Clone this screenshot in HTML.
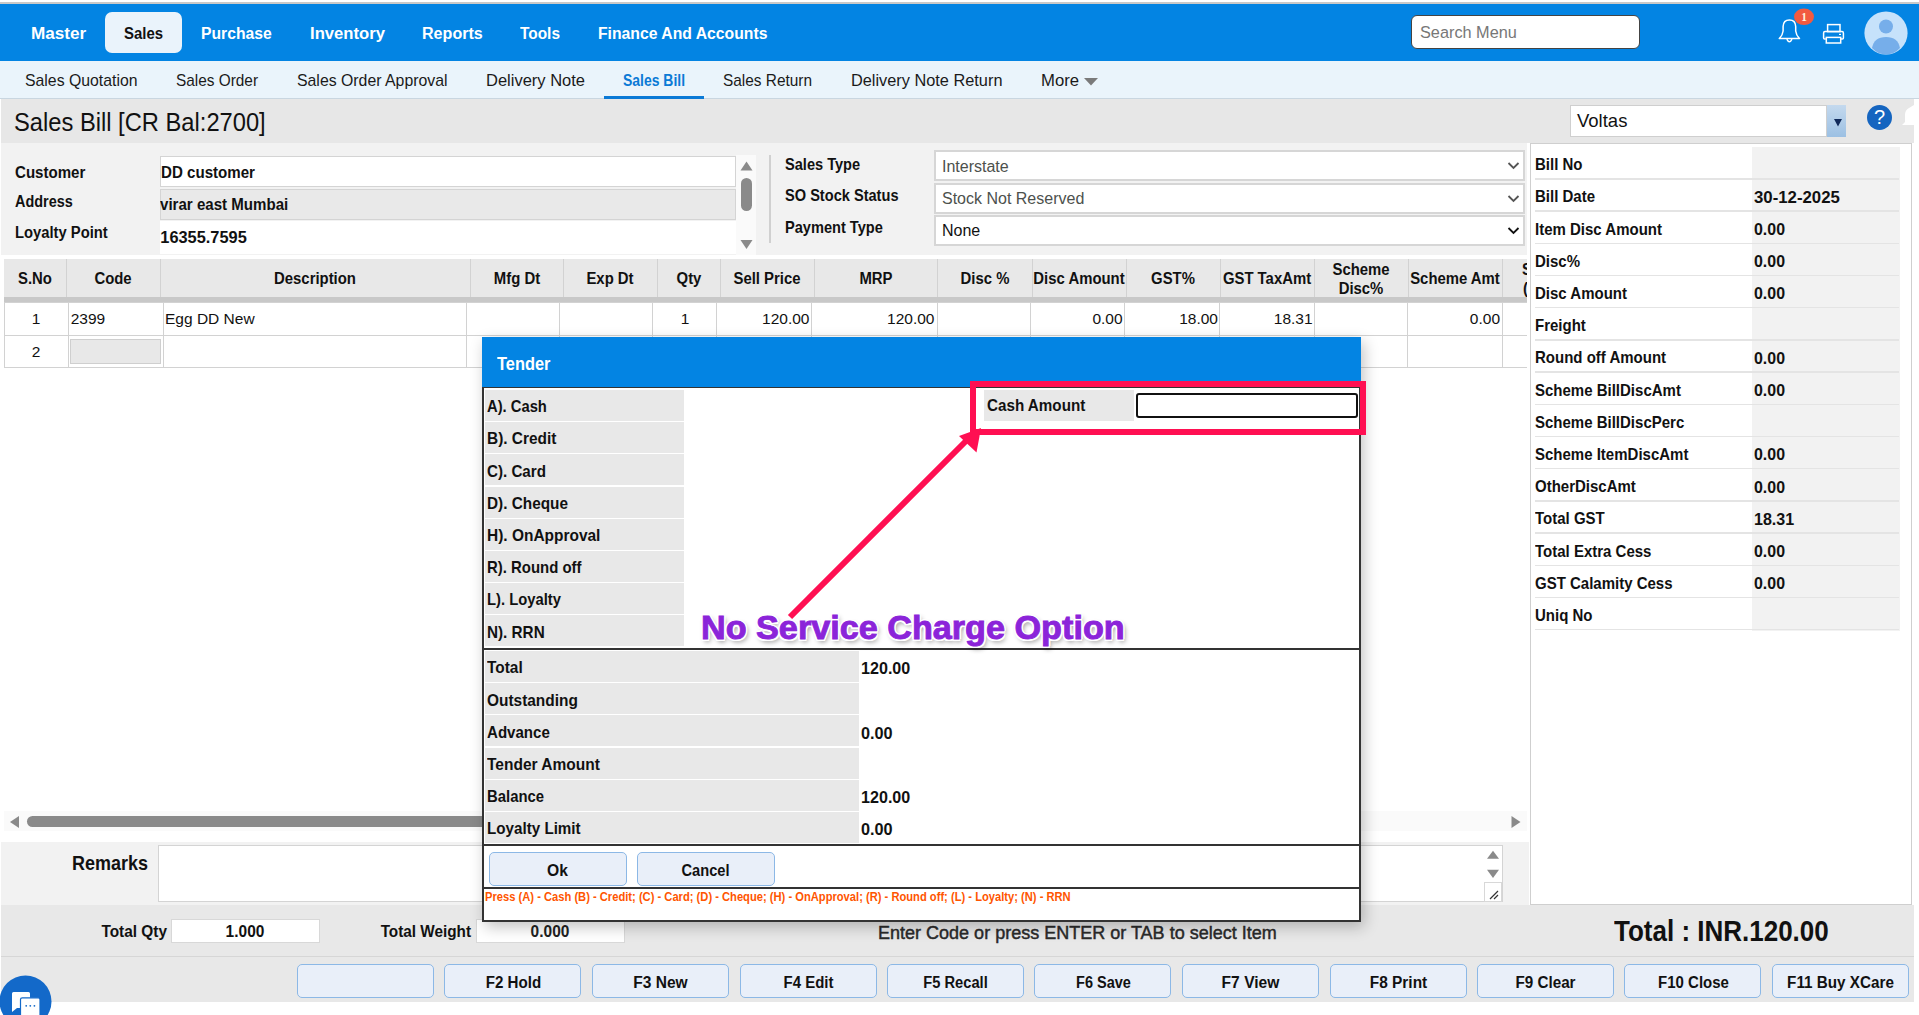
<!DOCTYPE html><html><head><meta charset="utf-8"><style>
html,body{margin:0;padding:0;width:1919px;height:1015px;overflow:hidden;background:#fff}
.t{position:absolute;white-space:nowrap;line-height:1;font-family:"Liberation Sans",sans-serif}
.r{position:absolute}
</style></head><body>
<div class="r" style="left:0px;top:0px;width:1919px;height:2px;background:#fff"></div>
<div class="r" style="left:0px;top:2px;width:1919px;height:2px;background:#c9c9c9"></div>
<div class="r" style="left:0px;top:4px;width:1919px;height:57px;background:#0384e3"></div>
<div class="r" style="left:105px;top:12px;width:77px;height:41px;background:#eaf3fb;border-radius:7px"></div>
<div class="t" style="left:31.4px;top:24.8px;font-size:17.38px;font-weight:700;color:#fff;transform:scaleX(0.9878);transform-origin:left;">Master</div>
<div class="t" style="left:201.3px;top:24.8px;font-size:17.38px;font-weight:700;color:#fff;transform:scaleX(0.9041);transform-origin:left;">Purchase</div>
<div class="t" style="left:309.7px;top:24.8px;font-size:17.38px;font-weight:700;color:#fff;transform:scaleX(0.9594);transform-origin:left;">Inventory</div>
<div class="t" style="left:421.7px;top:24.8px;font-size:17.38px;font-weight:700;color:#fff;transform:scaleX(0.9265);transform-origin:left;">Reports</div>
<div class="t" style="left:520.0px;top:24.8px;font-size:17.38px;font-weight:700;color:#fff;transform:scaleX(0.8886);transform-origin:left;">Tools</div>
<div class="t" style="left:598.0px;top:24.8px;font-size:17.38px;font-weight:700;color:#fff;transform:scaleX(0.9069);transform-origin:left;">Finance And Accounts</div>
<div class="t" style="left:124.1px;top:24.8px;font-size:17.38px;font-weight:700;color:#111;transform:scaleX(0.8592);transform-origin:left;">Sales</div>
<div class="r" style="left:1411px;top:15px;width:227px;height:32px;background:#fff;border:1.5px solid #444;border-radius:6px"></div>
<div class="t" style="left:1420.0px;top:24.2px;font-size:16.30px;font-weight:400;color:#777;">Search Menu</div>
<svg class="r" style="left:1770px;top:5px" width="80" height="45" viewBox="0 0 80 45"><path d="M9.3 33.6 H29.5 Q26.2 30.5 25.7 26 V21.5 Q25.5 14.9 19.4 14.9 Q13.3 14.9 13.1 21.5 V26 Q12.6 30.5 9.3 33.6 Z" fill="none" stroke="#fff" stroke-width="1.5" stroke-linejoin="round"/><path d="M16.8 34.2 Q19.4 39.5 22 34.2" fill="none" stroke="#fff" stroke-width="1.5"/><ellipse cx="34" cy="11.8" rx="10" ry="8.3" fill="#f25a40"/><text x="34" y="16" text-anchor="middle" font-family="Liberation Serif" font-weight="700" font-size="11.5" fill="#fff4dc">1</text><rect x="57.6" y="19.6" width="12.4" height="7" fill="none" stroke="#fff" stroke-width="1.5"/><path d="M55.8 34 H54.6 Q53.6 34 53.6 33 V28 Q53.6 26.6 55 26.6 H72 Q73.4 26.6 73.4 28 V33 Q73.4 34 72.4 34 H71" fill="none" stroke="#fff" stroke-width="1.5"/><rect x="56.3" y="32.4" width="14.4" height="5.6" fill="none" stroke="#fff" stroke-width="1.5"/><rect x="69" y="28.8" width="2" height="1.2" fill="#fff"/></svg>
<svg class="r" style="left:1864px;top:11px" width="44" height="44" viewBox="0 0 44 44"><circle cx="22" cy="22" r="21.6" fill="#c6e2fb"/><circle cx="22" cy="15.5" r="7" fill="#76aeea"/><path d="M8 37 Q10 26 22 26 Q34 26 36 37 Q30 43.5 22 43.5 Q14 43.5 8 37Z" fill="#76aeea"/></svg>
<div class="r" style="left:0px;top:61px;width:1919px;height:37px;background:#eaf4fb"></div>
<div class="r" style="left:0px;top:98px;width:1919px;height:1px;background:#c9d6e0"></div>
<div class="t" style="left:25.0px;top:73.0px;font-size:15.70px;font-weight:400;color:#1a1a1a;transform:scaleX(1.0081);transform-origin:left;">Sales Quotation</div>
<div class="t" style="left:176.0px;top:73.0px;font-size:15.70px;font-weight:400;color:#1a1a1a;transform:scaleX(0.9800);transform-origin:left;">Sales Order</div>
<div class="t" style="left:297.0px;top:73.0px;font-size:15.70px;font-weight:400;color:#1a1a1a;transform:scaleX(1.0096);transform-origin:left;">Sales Order Approval</div>
<div class="t" style="left:486.0px;top:73.0px;font-size:15.70px;font-weight:400;color:#1a1a1a;transform:scaleX(1.0518);transform-origin:left;">Delivery Note</div>
<div class="t" style="left:723.0px;top:73.0px;font-size:15.70px;font-weight:400;color:#1a1a1a;transform:scaleX(0.9817);transform-origin:left;">Sales Return</div>
<div class="t" style="left:850.6px;top:73.0px;font-size:15.70px;font-weight:400;color:#1a1a1a;transform:scaleX(1.0402);transform-origin:left;">Delivery Note Return</div>
<div class="t" style="left:1040.5px;top:73.0px;font-size:15.70px;font-weight:400;color:#1a1a1a;transform:scaleX(1.0639);transform-origin:left;">More</div>
<div class="t" style="left:623.0px;top:72.8px;font-size:15.95px;font-weight:700;color:#0b7ad6;transform:scaleX(0.8754);transform-origin:left;">Sales Bill</div>
<div class="r" style="left:604px;top:96px;width:100px;height:3px;background:#0b7ad6"></div>
<svg class="r" style="left:1083px;top:77px" width="16" height="10" viewBox="0 0 16 10"><path d="M1 1 H15 L8 8.6Z" fill="#7a7a7a"/></svg>
<div class="r" style="left:1px;top:99px;width:1913px;height:44px;background:#e7e7e7"></div>
<svg class="r" style="left:1900px;top:104px" width="16" height="26" viewBox="0 0 16 26"><path d="M14 1 L9 4 Q5 6 5 11 L5 18 L2 21 L14 21Z" fill="#fff"/></svg>
<div class="t" style="left:13.8px;top:109.6px;font-size:25.00px;font-weight:400;color:#111;transform:scaleX(0.9484);transform-origin:left;">Sales Bill [CR Bal:2700]</div>
<div class="r" style="left:1570px;top:105px;width:257px;height:32px;background:#fff;border:1px solid #cfcfcf;box-sizing:border-box"></div>
<div class="t" style="left:1577.0px;top:112.3px;font-size:18.50px;font-weight:400;color:#111;">Voltas</div>
<div class="r" style="left:1827px;top:105px;width:19px;height:32px;background:linear-gradient(#c4d9ee,#9cc0e3)"></div>
<svg class="r" style="left:1833px;top:118px" width="10" height="9" viewBox="0 0 10 9"><path d="M1 1 H9 L5 8.5Z" fill="#10295a"/></svg>
<div class="r" style="left:1867px;top:105px;width:25px;height:25px;border-radius:50%;background:#1565c0;color:#fff;font:400 20px/25px 'Liberation Sans',sans-serif;text-align:center">?</div>
<div class="r" style="left:1px;top:143px;width:1526px;height:112px;background:#f2f2f2"></div>
<div class="r" style="left:160px;top:156px;width:576px;height:31px;background:#fff;border:1px solid #d4d4d4;box-sizing:border-box"></div>
<div class="r" style="left:160px;top:189px;width:576px;height:31px;background:#e9e9e9;border:1px solid #d4d4d4;box-sizing:border-box"></div>
<div class="r" style="left:160px;top:221px;width:576px;height:33px;background:#fff"></div>
<div class="r" style="left:736px;top:155px;width:20px;height:100px;background:#fafafa"></div>
<svg class="r" style="left:739px;top:159px" width="15" height="92" viewBox="0 0 15 92"><path d="M1.5 11.5 H13.5 L7.5 2.5Z" fill="#8a8a8a"/><rect x="2" y="19" width="11" height="33" rx="5.5" fill="#8a8a8a"/><path d="M1.5 81 H13.5 L7.5 90Z" fill="#8a8a8a"/></svg>
<div class="r" style="left:769px;top:155px;width:2px;height:88px;background:#d0d0d0"></div>
<div class="t" style="left:14.7px;top:164.9px;font-size:16.61px;font-weight:700;color:#111;transform:scaleX(0.9069);transform-origin:left;">Customer</div>
<div class="t" style="left:14.7px;top:193.6px;font-size:16.61px;font-weight:700;color:#111;transform:scaleX(0.8683);transform-origin:left;">Address</div>
<div class="t" style="left:14.7px;top:225.4px;font-size:16.61px;font-weight:700;color:#111;transform:scaleX(0.8893);transform-origin:left;">Loyalty Point</div>
<div class="t" style="left:160.5px;top:164.5px;font-size:16.83px;font-weight:700;color:#111;transform:scaleX(0.8974);transform-origin:left;">DD customer</div>
<div class="t" style="left:160.3px;top:197.0px;font-size:16.83px;font-weight:700;color:#111;transform:scaleX(0.8959);transform-origin:left;">virar east Mumbai</div>
<div class="t" style="left:160.3px;top:228.6px;font-size:16.38px;font-weight:700;color:#111;">16355.7595</div>
<div class="t" style="left:785.0px;top:155.8px;font-size:16.06px;font-weight:700;color:#111;transform:scaleX(0.9091);transform-origin:left;">Sales Type</div>
<div class="t" style="left:785.0px;top:187.4px;font-size:16.06px;font-weight:700;color:#111;transform:scaleX(0.9091);transform-origin:left;">SO Stock Status</div>
<div class="t" style="left:785.0px;top:219.4px;font-size:16.06px;font-weight:700;color:#111;transform:scaleX(0.9091);transform-origin:left;">Payment Type</div>
<div class="r" style="left:934px;top:150px;width:591px;height:31px;background:#fff;border:2px solid #d6d6d6;box-sizing:border-box"></div>
<div class="t" style="left:942.0px;top:158.5px;font-size:16.00px;font-weight:400;color:#4d514d;">Interstate</div>
<svg class="r" style="left:1507px;top:161px" width="13" height="9" viewBox="0 0 13 9"><path d="M1.5 2 L6.5 7 L11.5 2" fill="none" stroke="#555" stroke-width="1.8"/></svg>
<div class="r" style="left:934px;top:183px;width:591px;height:31px;background:#fff;border:2px solid #d6d6d6;box-sizing:border-box"></div>
<div class="t" style="left:942.0px;top:191.2px;font-size:16.00px;font-weight:400;color:#4d514d;">Stock Not Reserved</div>
<svg class="r" style="left:1507px;top:194px" width="13" height="9" viewBox="0 0 13 9"><path d="M1.5 2 L6.5 7 L11.5 2" fill="none" stroke="#555" stroke-width="1.8"/></svg>
<div class="r" style="left:934px;top:215px;width:591px;height:31px;background:#fff;border:2px solid #d6d6d6;box-sizing:border-box"></div>
<div class="t" style="left:942.0px;top:222.8px;font-size:16.00px;font-weight:400;color:#111;">None</div>
<svg class="r" style="left:1507px;top:226px" width="13" height="9" viewBox="0 0 13 9"><path d="M1.5 2 L6.5 7 L11.5 2" fill="none" stroke="#111" stroke-width="1.8"/></svg>
<div class="r" style="left:1px;top:255px;width:1528px;height:650px;background:#fff"></div>
<div class="r" style="left:4px;top:259px;width:1523px;height:38px;background:#e8e8e8"></div>
<div class="r" style="left:4px;top:297px;width:1523px;height:6px;background:#c8c8c8"></div>
<div class="r" style="left:66px;top:259px;width:1px;height:38px;background:#d2d2d2"></div>
<div class="r" style="left:160px;top:259px;width:1px;height:38px;background:#d2d2d2"></div>
<div class="r" style="left:470px;top:259px;width:1px;height:38px;background:#d2d2d2"></div>
<div class="r" style="left:563px;top:259px;width:1px;height:38px;background:#d2d2d2"></div>
<div class="r" style="left:657px;top:259px;width:1px;height:38px;background:#d2d2d2"></div>
<div class="r" style="left:720px;top:259px;width:1px;height:38px;background:#d2d2d2"></div>
<div class="r" style="left:814px;top:259px;width:1px;height:38px;background:#d2d2d2"></div>
<div class="r" style="left:937px;top:259px;width:1px;height:38px;background:#d2d2d2"></div>
<div class="r" style="left:1032px;top:259px;width:1px;height:38px;background:#d2d2d2"></div>
<div class="r" style="left:1126px;top:259px;width:1px;height:38px;background:#d2d2d2"></div>
<div class="r" style="left:1220px;top:259px;width:1px;height:38px;background:#d2d2d2"></div>
<div class="r" style="left:1314px;top:259px;width:1px;height:38px;background:#d2d2d2"></div>
<div class="r" style="left:1408px;top:259px;width:1px;height:38px;background:#d2d2d2"></div>
<div class="r" style="left:1502px;top:259px;width:1px;height:38px;background:#d2d2d2"></div>
<div class="t" style="left:-65.0px;width:200px;text-align:center;top:269.9px;font-size:16.39px;font-weight:700;color:#111;transform:scaleX(0.9091);transform-origin:center;">S.No</div>
<div class="t" style="left:13.0px;width:200px;text-align:center;top:269.9px;font-size:16.39px;font-weight:700;color:#111;transform:scaleX(0.9091);transform-origin:center;">Code</div>
<div class="t" style="left:215.0px;width:200px;text-align:center;top:269.9px;font-size:16.39px;font-weight:700;color:#111;transform:scaleX(0.9091);transform-origin:center;">Description</div>
<div class="t" style="left:416.5px;width:200px;text-align:center;top:269.9px;font-size:16.39px;font-weight:700;color:#111;transform:scaleX(0.9091);transform-origin:center;">Mfg Dt</div>
<div class="t" style="left:510.0px;width:200px;text-align:center;top:269.9px;font-size:16.39px;font-weight:700;color:#111;transform:scaleX(0.9091);transform-origin:center;">Exp Dt</div>
<div class="t" style="left:588.5px;width:200px;text-align:center;top:269.9px;font-size:16.39px;font-weight:700;color:#111;transform:scaleX(0.9091);transform-origin:center;">Qty</div>
<div class="t" style="left:667.0px;width:200px;text-align:center;top:269.9px;font-size:16.39px;font-weight:700;color:#111;transform:scaleX(0.9091);transform-origin:center;">Sell Price</div>
<div class="t" style="left:775.5px;width:200px;text-align:center;top:269.9px;font-size:16.39px;font-weight:700;color:#111;transform:scaleX(0.9091);transform-origin:center;">MRP</div>
<div class="t" style="left:884.5px;width:200px;text-align:center;top:269.9px;font-size:16.39px;font-weight:700;color:#111;transform:scaleX(0.9091);transform-origin:center;">Disc %</div>
<div class="t" style="left:979.0px;width:200px;text-align:center;top:269.9px;font-size:16.39px;font-weight:700;color:#111;transform:scaleX(0.9091);transform-origin:center;">Disc Amount</div>
<div class="t" style="left:1073.0px;width:200px;text-align:center;top:269.9px;font-size:16.39px;font-weight:700;color:#111;transform:scaleX(0.9091);transform-origin:center;">GST%</div>
<div class="t" style="left:1167.0px;width:200px;text-align:center;top:269.9px;font-size:16.39px;font-weight:700;color:#111;transform:scaleX(0.9091);transform-origin:center;">GST TaxAmt</div>
<div class="t" style="left:1355.0px;width:200px;text-align:center;top:269.9px;font-size:16.39px;font-weight:700;color:#111;transform:scaleX(0.9091);transform-origin:center;">Scheme Amt</div>
<div class="t" style="left:1522.0px;top:261.1px;font-size:16.50px;font-weight:700;color:#111;transform:scaleX(0.9091);transform-origin:left;">S</div>
<div class="t" style="left:1523.0px;top:280.0px;font-size:16.50px;font-weight:700;color:#111;transform:scaleX(0.9091);transform-origin:left;">(</div>
<div class="r" style="left:1527px;top:258px;width:3px;height:46px;background:#fff"></div>
<div class="t" style="left:1261.0px;width:200px;text-align:center;top:261.2px;font-size:16.39px;font-weight:700;color:#111;transform:scaleX(0.9091);transform-origin:center;">Scheme</div>
<div class="t" style="left:1261.0px;width:200px;text-align:center;top:280.1px;font-size:16.39px;font-weight:700;color:#111;transform:scaleX(0.9091);transform-origin:center;">Disc%</div>
<div class="r" style="left:4px;top:302px;width:1523px;height:1px;background:#d2d2d2"></div>
<div class="r" style="left:4px;top:335px;width:1523px;height:1px;background:#d2d2d2"></div>
<div class="r" style="left:4px;top:367px;width:1523px;height:1px;background:#d2d2d2"></div>
<div class="r" style="left:4px;top:303px;width:1px;height:64px;background:#d2d2d2"></div>
<div class="r" style="left:68px;top:303px;width:1px;height:64px;background:#d2d2d2"></div>
<div class="r" style="left:163px;top:303px;width:1px;height:64px;background:#d2d2d2"></div>
<div class="r" style="left:466px;top:303px;width:1px;height:64px;background:#d2d2d2"></div>
<div class="r" style="left:559px;top:303px;width:1px;height:64px;background:#d2d2d2"></div>
<div class="r" style="left:652px;top:303px;width:1px;height:64px;background:#d2d2d2"></div>
<div class="r" style="left:716px;top:303px;width:1px;height:64px;background:#d2d2d2"></div>
<div class="r" style="left:811px;top:303px;width:1px;height:64px;background:#d2d2d2"></div>
<div class="r" style="left:937px;top:303px;width:1px;height:64px;background:#d2d2d2"></div>
<div class="r" style="left:1030px;top:303px;width:1px;height:64px;background:#d2d2d2"></div>
<div class="r" style="left:1124px;top:303px;width:1px;height:64px;background:#d2d2d2"></div>
<div class="r" style="left:1219px;top:303px;width:1px;height:64px;background:#d2d2d2"></div>
<div class="r" style="left:1314px;top:303px;width:1px;height:64px;background:#d2d2d2"></div>
<div class="r" style="left:1407px;top:303px;width:1px;height:64px;background:#d2d2d2"></div>
<div class="r" style="left:1502px;top:303px;width:1px;height:64px;background:#d2d2d2"></div>
<div class="t" style="left:16.0px;width:40px;text-align:center;top:311.4px;font-size:15.50px;font-weight:400;color:#111;">1</div>
<div class="t" style="left:70.7px;top:311.4px;font-size:15.50px;font-weight:400;color:#111;">2399</div>
<div class="t" style="left:165.0px;top:311.4px;font-size:15.50px;font-weight:400;color:#111;">Egg DD New</div>
<div class="t" style="left:665.0px;width:40px;text-align:center;top:311.4px;font-size:15.50px;font-weight:400;color:#111;">1</div>
<div class="t" style="left:689.5px;width:120px;text-align:right;top:311.4px;font-size:15.50px;font-weight:400;color:#111;">120.00</div>
<div class="t" style="left:814.5px;width:120px;text-align:right;top:311.4px;font-size:15.50px;font-weight:400;color:#111;">120.00</div>
<div class="t" style="left:1002.6px;width:120px;text-align:right;top:311.4px;font-size:15.50px;font-weight:400;color:#111;">0.00</div>
<div class="t" style="left:1098.0px;width:120px;text-align:right;top:311.4px;font-size:15.50px;font-weight:400;color:#111;">18.00</div>
<div class="t" style="left:1192.6px;width:120px;text-align:right;top:311.4px;font-size:15.50px;font-weight:400;color:#111;">18.31</div>
<div class="t" style="left:1380.0px;width:120px;text-align:right;top:311.4px;font-size:15.50px;font-weight:400;color:#111;">0.00</div>
<div class="t" style="left:16.0px;width:40px;text-align:center;top:344.4px;font-size:15.50px;font-weight:400;color:#111;">2</div>
<div class="r" style="left:70px;top:339px;width:91px;height:25px;background:#e8e8e8;border:1px solid #cfcfcf;box-sizing:border-box"></div>
<div class="r" style="left:4px;top:811px;width:1523px;height:20px;background:#fafafa"></div>
<svg class="r" style="left:8px;top:815px" width="12" height="14" viewBox="0 0 12 14"><path d="M11 1 V13 L2 7Z" fill="#8a8a8a"/></svg>
<div class="r" style="left:27px;top:816px;width:460px;height:11px;background:#8a8a8a;border-radius:5.5px"></div>
<svg class="r" style="left:1510px;top:815px" width="12" height="14" viewBox="0 0 12 14"><path d="M1.5 1 V13 L10.5 7Z" fill="#8a8a8a"/></svg>
<div class="r" style="left:1px;top:842px;width:1528px;height:63px;background:#f2f2f2"></div>
<div class="t" style="left:-52.0px;width:200px;text-align:right;top:853.7px;font-size:19.80px;font-weight:700;color:#111;transform:scaleX(0.9091);transform-origin:right;">Remarks</div>
<div class="r" style="left:158px;top:845px;width:1345px;height:57px;background:#fff;border:1px solid #d4d4d4;box-sizing:border-box"></div>
<svg class="r" style="left:1484px;top:846px" width="18" height="56" viewBox="0 0 18 56"><path d="M3 12.8 H15 L9 4.8Z" fill="#8a8a8a"/><path d="M3 23.8 H15 L9 32Z" fill="#8a8a8a"/><rect x="0.5" y="36.5" width="17" height="19" fill="#fff" stroke="#d8d8d8"/><path d="M6 53 L14 45 M10 53 L14 49" stroke="#333" stroke-width="1.2"/></svg>
<div class="r" style="left:1530px;top:143px;width:382px;height:762px;background:#fff;border:1.5px solid #cfcfcf;box-sizing:border-box"></div>
<div class="r" style="left:1752px;top:147px;width:148px;height:484px;background:#f2f2f2"></div>
<div class="r" style="left:1535px;top:178.1px;width:364px;height:1.5px;background:#e4e4e4"></div>
<div class="t" style="left:1535.3px;top:156.2px;font-size:16.50px;font-weight:700;color:#111;transform:scaleX(0.9091);transform-origin:left;">Bill No</div>
<div class="r" style="left:1535px;top:210.3px;width:364px;height:1.5px;background:#e4e4e4"></div>
<div class="t" style="left:1535.3px;top:188.4px;font-size:16.50px;font-weight:700;color:#111;transform:scaleX(0.9091);transform-origin:left;">Bill Date</div>
<div class="t" style="left:1753.5px;top:189.8px;font-size:15.81px;font-weight:700;color:#111;transform:scaleX(1.0621);transform-origin:left;">30-12-2025</div>
<div class="r" style="left:1535px;top:242.5px;width:364px;height:1.5px;background:#e4e4e4"></div>
<div class="t" style="left:1535.3px;top:220.6px;font-size:16.50px;font-weight:700;color:#111;transform:scaleX(0.9091);transform-origin:left;">Item Disc Amount</div>
<div class="t" style="left:1753.5px;top:222.0px;font-size:15.81px;font-weight:700;color:#111;transform:scaleX(1.0086);transform-origin:left;">0.00</div>
<div class="r" style="left:1535px;top:274.7px;width:364px;height:1.5px;background:#e4e4e4"></div>
<div class="t" style="left:1535.3px;top:252.8px;font-size:16.50px;font-weight:700;color:#111;transform:scaleX(0.9091);transform-origin:left;">Disc%</div>
<div class="t" style="left:1753.5px;top:254.2px;font-size:15.81px;font-weight:700;color:#111;transform:scaleX(1.0086);transform-origin:left;">0.00</div>
<div class="r" style="left:1535px;top:306.9px;width:364px;height:1.5px;background:#e4e4e4"></div>
<div class="t" style="left:1535.3px;top:285.0px;font-size:16.50px;font-weight:700;color:#111;transform:scaleX(0.9091);transform-origin:left;">Disc Amount</div>
<div class="t" style="left:1753.5px;top:286.4px;font-size:15.81px;font-weight:700;color:#111;transform:scaleX(1.0086);transform-origin:left;">0.00</div>
<div class="r" style="left:1535px;top:339.1px;width:364px;height:1.5px;background:#e4e4e4"></div>
<div class="t" style="left:1535.3px;top:317.2px;font-size:16.50px;font-weight:700;color:#111;transform:scaleX(0.9091);transform-origin:left;">Freight</div>
<div class="r" style="left:1535px;top:371.3px;width:364px;height:1.5px;background:#e4e4e4"></div>
<div class="t" style="left:1535.3px;top:349.4px;font-size:16.50px;font-weight:700;color:#111;transform:scaleX(0.9091);transform-origin:left;">Round off Amount</div>
<div class="t" style="left:1753.5px;top:350.8px;font-size:15.81px;font-weight:700;color:#111;transform:scaleX(1.0086);transform-origin:left;">0.00</div>
<div class="r" style="left:1535px;top:403.5px;width:364px;height:1.5px;background:#e4e4e4"></div>
<div class="t" style="left:1535.3px;top:381.6px;font-size:16.50px;font-weight:700;color:#111;transform:scaleX(0.9091);transform-origin:left;">Scheme BillDiscAmt</div>
<div class="t" style="left:1753.5px;top:383.0px;font-size:15.81px;font-weight:700;color:#111;transform:scaleX(1.0086);transform-origin:left;">0.00</div>
<div class="r" style="left:1535px;top:435.7px;width:364px;height:1.5px;background:#e4e4e4"></div>
<div class="t" style="left:1535.3px;top:413.8px;font-size:16.50px;font-weight:700;color:#111;transform:scaleX(0.9091);transform-origin:left;">Scheme BillDiscPerc</div>
<div class="r" style="left:1535px;top:467.9px;width:364px;height:1.5px;background:#e4e4e4"></div>
<div class="t" style="left:1535.3px;top:446.0px;font-size:16.50px;font-weight:700;color:#111;transform:scaleX(0.9091);transform-origin:left;">Scheme ItemDiscAmt</div>
<div class="t" style="left:1753.5px;top:447.4px;font-size:15.81px;font-weight:700;color:#111;transform:scaleX(1.0086);transform-origin:left;">0.00</div>
<div class="r" style="left:1535px;top:500.1px;width:364px;height:1.5px;background:#e4e4e4"></div>
<div class="t" style="left:1535.3px;top:478.2px;font-size:16.50px;font-weight:700;color:#111;transform:scaleX(0.9091);transform-origin:left;">OtherDiscAmt</div>
<div class="t" style="left:1753.5px;top:479.6px;font-size:15.81px;font-weight:700;color:#111;transform:scaleX(1.0086);transform-origin:left;">0.00</div>
<div class="r" style="left:1535px;top:532.3px;width:364px;height:1.5px;background:#e4e4e4"></div>
<div class="t" style="left:1535.3px;top:510.4px;font-size:16.50px;font-weight:700;color:#111;transform:scaleX(0.9091);transform-origin:left;">Total GST</div>
<div class="t" style="left:1753.5px;top:511.8px;font-size:15.81px;font-weight:700;color:#111;transform:scaleX(1.0173);transform-origin:left;">18.31</div>
<div class="r" style="left:1535px;top:564.5px;width:364px;height:1.5px;background:#e4e4e4"></div>
<div class="t" style="left:1535.3px;top:542.6px;font-size:16.50px;font-weight:700;color:#111;transform:scaleX(0.9091);transform-origin:left;">Total Extra Cess</div>
<div class="t" style="left:1753.5px;top:544.0px;font-size:15.81px;font-weight:700;color:#111;transform:scaleX(1.0086);transform-origin:left;">0.00</div>
<div class="r" style="left:1535px;top:596.7px;width:364px;height:1.5px;background:#e4e4e4"></div>
<div class="t" style="left:1535.3px;top:574.8px;font-size:16.50px;font-weight:700;color:#111;transform:scaleX(0.9091);transform-origin:left;">GST Calamity Cess</div>
<div class="t" style="left:1753.5px;top:576.2px;font-size:15.81px;font-weight:700;color:#111;transform:scaleX(1.0086);transform-origin:left;">0.00</div>
<div class="r" style="left:1535px;top:628.9px;width:364px;height:1.5px;background:#e4e4e4"></div>
<div class="t" style="left:1535.3px;top:607.0px;font-size:16.50px;font-weight:700;color:#111;transform:scaleX(0.9091);transform-origin:left;">Uniq No</div>
<div class="r" style="left:1px;top:905px;width:1913px;height:97px;background:#e8e8e8"></div>
<div class="r" style="left:1px;top:956px;width:1913px;height:1px;background:#d6d6d6"></div>
<div class="t" style="left:-33.3px;width:200px;text-align:right;top:924.0px;font-size:16.94px;font-weight:700;color:#111;transform:scaleX(0.9091);transform-origin:right;">Total Qty</div>
<div class="r" style="left:171px;top:919px;width:149px;height:24px;background:#fff;border:1px solid #d8d8d8;box-sizing:border-box"></div>
<div class="t" style="left:185.0px;width:120px;text-align:center;top:922.6px;font-size:17.05px;font-weight:700;color:#111;transform:scaleX(0.9091);transform-origin:center;">1.000</div>
<div class="t" style="left:270.6px;width:200px;text-align:right;top:924.1px;font-size:16.83px;font-weight:700;color:#111;transform:scaleX(0.9091);transform-origin:right;">Total Weight</div>
<div class="r" style="left:476px;top:919px;width:149px;height:24px;background:#fff;border:1px solid #d8d8d8;box-sizing:border-box"></div>
<div class="t" style="left:490.0px;width:120px;text-align:center;top:922.6px;font-size:17.05px;font-weight:700;color:#222;transform:scaleX(0.9091);transform-origin:center;">0.000</div>
<div class="t" style="left:878.0px;top:923.5px;font-size:18.30px;font-weight:400;color:#2a2a2a;transform:scaleX(0.9853);transform-origin:left;-webkit-text-stroke:0.45px #2a2a2a">Enter Code or press ENTER or TAB to select Item</div>
<div class="t" style="left:1614.0px;top:917.1px;font-size:28.60px;font-weight:700;color:#111;transform:scaleX(0.9091);transform-origin:left;">Total : INR.120.00</div>
<div class="r" style="left:297px;top:964px;width:137px;height:34px;background:#e9eff9;border:1.5px solid #8cb8e6;border-radius:5px;box-sizing:border-box"></div>
<div class="r" style="left:444px;top:964px;width:137px;height:34px;background:#e9eff9;border:1.5px solid #8cb8e6;border-radius:5px;box-sizing:border-box"></div>
<div class="t" style="left:444.5px;width:137px;text-align:center;top:974.3px;font-size:17.16px;font-weight:700;color:#111;transform:scaleX(0.8820);transform-origin:center;">F2 Hold</div>
<div class="r" style="left:592px;top:964px;width:137px;height:34px;background:#e9eff9;border:1.5px solid #8cb8e6;border-radius:5px;box-sizing:border-box"></div>
<div class="t" style="left:592.0px;width:137px;text-align:center;top:974.3px;font-size:17.16px;font-weight:700;color:#111;transform:scaleX(0.9055);transform-origin:center;">F3 New</div>
<div class="r" style="left:740px;top:964px;width:137px;height:34px;background:#e9eff9;border:1.5px solid #8cb8e6;border-radius:5px;box-sizing:border-box"></div>
<div class="t" style="left:739.5px;width:137px;text-align:center;top:974.3px;font-size:17.16px;font-weight:700;color:#111;transform:scaleX(0.8723);transform-origin:center;">F4 Edit</div>
<div class="r" style="left:887px;top:964px;width:137px;height:34px;background:#e9eff9;border:1.5px solid #8cb8e6;border-radius:5px;box-sizing:border-box"></div>
<div class="t" style="left:887.0px;width:137px;text-align:center;top:974.3px;font-size:17.16px;font-weight:700;color:#111;transform:scaleX(0.8559);transform-origin:center;">F5 Recall</div>
<div class="r" style="left:1034px;top:964px;width:137px;height:34px;background:#e9eff9;border:1.5px solid #8cb8e6;border-radius:5px;box-sizing:border-box"></div>
<div class="t" style="left:1034.5px;width:137px;text-align:center;top:974.3px;font-size:17.16px;font-weight:700;color:#111;transform:scaleX(0.8447);transform-origin:center;">F6 Save</div>
<div class="r" style="left:1182px;top:964px;width:137px;height:34px;background:#e9eff9;border:1.5px solid #8cb8e6;border-radius:5px;box-sizing:border-box"></div>
<div class="t" style="left:1182.0px;width:137px;text-align:center;top:974.3px;font-size:17.16px;font-weight:700;color:#111;transform:scaleX(0.9091);transform-origin:center;">F7 View</div>
<div class="r" style="left:1330px;top:964px;width:137px;height:34px;background:#e9eff9;border:1.5px solid #8cb8e6;border-radius:5px;box-sizing:border-box"></div>
<div class="t" style="left:1329.5px;width:137px;text-align:center;top:974.3px;font-size:17.16px;font-weight:700;color:#111;transform:scaleX(0.8986);transform-origin:center;">F8 Print</div>
<div class="r" style="left:1477px;top:964px;width:137px;height:34px;background:#e9eff9;border:1.5px solid #8cb8e6;border-radius:5px;box-sizing:border-box"></div>
<div class="t" style="left:1477.0px;width:137px;text-align:center;top:974.3px;font-size:17.16px;font-weight:700;color:#111;transform:scaleX(0.8875);transform-origin:center;">F9 Clear</div>
<div class="r" style="left:1624px;top:964px;width:137px;height:34px;background:#e9eff9;border:1.5px solid #8cb8e6;border-radius:5px;box-sizing:border-box"></div>
<div class="t" style="left:1624.5px;width:137px;text-align:center;top:974.3px;font-size:17.16px;font-weight:700;color:#111;transform:scaleX(0.8732);transform-origin:center;">F10 Close</div>
<div class="r" style="left:1772px;top:964px;width:137px;height:34px;background:#e9eff9;border:1.5px solid #8cb8e6;border-radius:5px;box-sizing:border-box"></div>
<div class="t" style="left:1772.0px;width:137px;text-align:center;top:974.3px;font-size:17.16px;font-weight:700;color:#111;transform:scaleX(0.8887);transform-origin:center;">F11 Buy XCare</div>
<svg class="r" style="left:0px;top:974px" width="54" height="41" viewBox="0 0 54 41"><circle cx="25.5" cy="27.4" r="26" fill="#1369c9"/><path d="M13.5 18 H28.5 Q30 18 30 19.5 V34 H17 L12 38 V19.5 Q12 18 13.5 18Z" fill="#fff"/><rect x="20.5" y="23.8" width="19.5" height="20" rx="1.8" fill="#fff" stroke="#1369c9" stroke-width="1.2"/><circle cx="26.2" cy="31.8" r="0.9" fill="#1369c9"/><circle cx="30.3" cy="31.8" r="0.9" fill="#1369c9"/><circle cx="34.4" cy="31.8" r="0.9" fill="#1369c9"/></svg>
<div class="r" style="left:482px;top:337px;width:879px;height:585px;box-shadow:3px 5px 14px rgba(0,0,0,0.24)"></div>
<div class="r" style="left:482px;top:337px;width:879px;height:51px;background:#0384e3"></div>
<div class="t" style="left:496.8px;top:354.7px;font-size:18.04px;font-weight:700;color:#fff;transform:scaleX(0.9091);transform-origin:left;">Tender</div>
<div class="r" style="left:482px;top:387px;width:879px;height:535px;background:#fff;border:2.5px solid #333;border-top-width:1.5px;box-sizing:border-box"></div>
<div class="r" style="left:485px;top:390px;width:199px;height:31px;background:#e8e8e8"></div>
<div class="t" style="left:487.3px;top:398.2px;font-size:17.05px;font-weight:700;color:#111;transform:scaleX(0.8664);transform-origin:left;">A). Cash</div>
<div class="r" style="left:485px;top:422px;width:199px;height:31px;background:#e8e8e8"></div>
<div class="t" style="left:487.3px;top:430.4px;font-size:17.05px;font-weight:700;color:#111;transform:scaleX(0.9048);transform-origin:left;">B). Credit</div>
<div class="r" style="left:485px;top:454px;width:199px;height:31px;background:#e8e8e8"></div>
<div class="t" style="left:487.3px;top:462.6px;font-size:17.05px;font-weight:700;color:#111;transform:scaleX(0.8899);transform-origin:left;">C). Card</div>
<div class="r" style="left:485px;top:487px;width:199px;height:31px;background:#e8e8e8"></div>
<div class="t" style="left:487.3px;top:494.8px;font-size:17.05px;font-weight:700;color:#111;transform:scaleX(0.9005);transform-origin:left;">D). Cheque</div>
<div class="r" style="left:485px;top:519px;width:199px;height:31px;background:#e8e8e8"></div>
<div class="t" style="left:487.3px;top:527.0px;font-size:17.05px;font-weight:700;color:#111;transform:scaleX(0.9080);transform-origin:left;">H). OnApproval</div>
<div class="r" style="left:485px;top:551px;width:199px;height:31px;background:#e8e8e8"></div>
<div class="t" style="left:487.3px;top:559.2px;font-size:17.05px;font-weight:700;color:#111;transform:scaleX(0.8769);transform-origin:left;">R). Round off</div>
<div class="r" style="left:485px;top:583px;width:199px;height:31px;background:#e8e8e8"></div>
<div class="t" style="left:487.3px;top:591.4px;font-size:17.05px;font-weight:700;color:#111;transform:scaleX(0.8684);transform-origin:left;">L). Loyalty</div>
<div class="r" style="left:485px;top:615px;width:199px;height:31px;background:#e8e8e8"></div>
<div class="t" style="left:487.3px;top:623.6px;font-size:17.05px;font-weight:700;color:#111;transform:scaleX(0.8961);transform-origin:left;">N). RRN</div>
<div class="r" style="left:484px;top:648px;width:876px;height:2px;background:#333"></div>
<div class="r" style="left:485px;top:651px;width:374px;height:31px;background:#e8e8e8"></div>
<div class="t" style="left:487.3px;top:659.3px;font-size:17.05px;font-weight:700;color:#111;transform:scaleX(0.9052);transform-origin:left;">Total</div>
<div class="t" style="left:861.0px;top:660.1px;font-size:16.12px;font-weight:700;color:#111;">120.00</div>
<div class="r" style="left:485px;top:683px;width:374px;height:31px;background:#e8e8e8"></div>
<div class="t" style="left:487.3px;top:691.5px;font-size:17.05px;font-weight:700;color:#111;transform:scaleX(0.9059);transform-origin:left;">Outstanding</div>
<div class="r" style="left:485px;top:715px;width:374px;height:31px;background:#e8e8e8"></div>
<div class="t" style="left:487.3px;top:723.7px;font-size:17.05px;font-weight:700;color:#111;transform:scaleX(0.8851);transform-origin:left;">Advance</div>
<div class="t" style="left:861.0px;top:724.5px;font-size:16.12px;font-weight:700;color:#111;transform:scaleX(1.0087);transform-origin:left;">0.00</div>
<div class="r" style="left:485px;top:748px;width:374px;height:31px;background:#e8e8e8"></div>
<div class="t" style="left:487.3px;top:755.9px;font-size:17.05px;font-weight:700;color:#111;transform:scaleX(0.9103);transform-origin:left;">Tender Amount</div>
<div class="r" style="left:485px;top:780px;width:374px;height:31px;background:#e8e8e8"></div>
<div class="t" style="left:487.3px;top:788.1px;font-size:17.05px;font-weight:700;color:#111;transform:scaleX(0.8732);transform-origin:left;">Balance</div>
<div class="t" style="left:861.0px;top:788.9px;font-size:16.12px;font-weight:700;color:#111;">120.00</div>
<div class="r" style="left:485px;top:812px;width:374px;height:31px;background:#e8e8e8"></div>
<div class="t" style="left:487.3px;top:820.3px;font-size:17.05px;font-weight:700;color:#111;transform:scaleX(0.8915);transform-origin:left;">Loyalty Limit</div>
<div class="t" style="left:861.0px;top:821.1px;font-size:16.12px;font-weight:700;color:#111;transform:scaleX(1.0087);transform-origin:left;">0.00</div>
<div class="r" style="left:484px;top:844px;width:876px;height:2px;background:#333"></div>
<div class="r" style="left:489px;top:852px;width:138px;height:34px;background:#e9eff9;border:1.5px solid #8cb8e6;border-radius:5px;box-sizing:border-box"></div>
<div class="t" style="left:489.0px;width:137px;text-align:center;top:862.1px;font-size:17.16px;font-weight:700;color:#111;transform:scaleX(0.9130);transform-origin:center;">Ok</div>
<div class="r" style="left:637px;top:852px;width:138px;height:34px;background:#e9eff9;border:1.5px solid #8cb8e6;border-radius:5px;box-sizing:border-box"></div>
<div class="t" style="left:637.0px;width:137px;text-align:center;top:862.1px;font-size:17.16px;font-weight:700;color:#111;transform:scaleX(0.8529);transform-origin:center;">Cancel</div>
<div class="r" style="left:484px;top:887px;width:876px;height:2px;background:#333"></div>
<div class="t" style="left:485.0px;top:890.0px;font-size:13.42px;font-weight:700;color:#ff5500;transform:scaleX(0.8331);transform-origin:left;">Press (A) - Cash (B) - Credit; (C) - Card; (D) - Cheque; (H) - OnApproval; (R) - Round off; (L) - Loyalty; (N) - RRN</div>
<div class="r" style="left:984px;top:390px;width:150px;height:31px;background:#e8e8e8"></div>
<div class="t" style="left:987.1px;top:398.4px;font-size:16.72px;font-weight:700;color:#111;transform:scaleX(0.9106);transform-origin:left;">Cash Amount</div>
<div class="r" style="left:1136px;top:393px;width:222px;height:25px;background:#fff;border:2px solid #111;border-radius:3px;box-sizing:border-box"></div>
<div class="r" style="left:970px;top:381px;width:396px;height:54px;border:6.5px solid #ff0f52;box-sizing:border-box"></div>
<svg class="r" style="left:0;top:0" width="1919" height="1015"><line x1="790" y1="617" x2="972" y2="435" stroke="#ff0f52" stroke-width="6"/><path d="M959 436 L981 428 L976.5 452.5Z" fill="#ff0f52"/></svg>
<div class="t" style="left:701.3px;top:610.5px;font-size:33.00px;font-weight:700;color:#8b24d9;transform:scaleX(1.0360);transform-origin:left;-webkit-text-stroke:0.9px #8b24d9;text-shadow:2px 0 #fff,-2px 0 #fff,0 2px #fff,0 -2px #fff,1.5px 1.5px #fff,-1.5px 1.5px #fff,1.5px -1.5px #fff,-1.5px -1.5px #fff,2px 3px 5px rgba(0,0,0,0.45)">No Service Charge Option</div>
</body></html>
